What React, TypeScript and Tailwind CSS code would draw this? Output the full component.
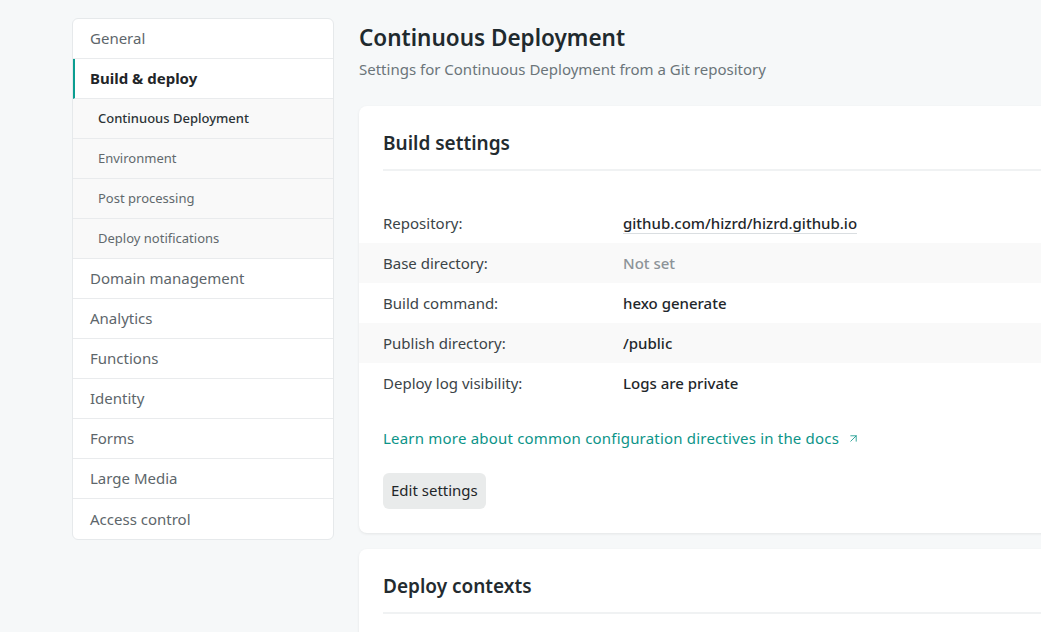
import { ArrowUpRight } from "lucide-react";

const navTop = ["General"];
const subNav = ["Continuous Deployment", "Environment", "Post processing", "Deploy notifications"];
const navBottom = ["Domain management", "Analytics", "Functions", "Identity", "Forms", "Large Media", "Access control"];

const rows = [
  { label: "Repository:", value: "github.com/hizrd/hizrd.github.io", kind: "link" },
  { label: "Base directory:", value: "Not set", kind: "muted" },
  { label: "Build command:", value: "hexo generate", kind: "plain" },
  { label: "Publish directory:", value: "/public", kind: "plain" },
  { label: "Deploy log visibility:", value: "Logs are private", kind: "plain" },
];

const Sidebar = () => {
  return (
    <nav className="w-[262px] shrink-0 self-start bg-white border border-[#e6e9eb] rounded-md overflow-hidden">
      {navTop.map((item) => (
        <div key={item} className="h-10 flex items-center pl-[17px] text-[15px] text-[#5d666b] border-b border-[#e9ebed]">
          {item}
        </div>
      ))}
      <div className="h-10 flex items-center pl-[15px] border-l-2 border-[#0b9e91] border-b border-b-[#e9ebed] text-[15px] font-bold text-[#1f2629]">
        Build &amp; deploy
      </div>
      {subNav.map((item, i) => (
        <div
          key={item}
          className={`h-10 flex items-center pl-[25px] text-[13px] bg-[#f9f9f9] border-b border-[#e9ebed] ${
            i === 0 ? "text-[#2b3336] font-medium" : "text-[#61696d]"
          }`}
        >
          {item}
        </div>
      ))}
      {navBottom.map((item, i) => (
        <div
          key={item}
          className={`h-10 flex items-center pl-[17px] text-[15px] text-[#5d666b] ${
            i < navBottom.length - 1 ? "border-b border-[#e9ebed]" : ""
          }`}
        >
          {item}
        </div>
      ))}
    </nav>
  );
};

const App = () => {
  return (
    <div
      className="h-[632px] overflow-hidden bg-[#f6f8f9] flex gap-[25px] pl-[72px] pt-[18px]"
      style={{ fontFamily: '"Noto Sans", "Open Sans", sans-serif' }}
    >
      <Sidebar />
      <main className="w-[760px] shrink-0">
        <h1 className="text-[22.5px] leading-[30px] font-semibold text-[#1f2a2e] mt-[5px]">Continuous Deployment</h1>
        <p className="text-[15px] leading-5 text-[#6b7579] mt-[6px]">
          Settings for Continuous Deployment from a Git repository
        </p>

        <section className="mt-[27px] bg-white rounded-lg shadow-[0_1px_3px_rgba(0,0,0,0.08)] pt-[21px] pb-6">
          <div className="ml-6 border-b-2 border-[#f0f2f3] pb-[10px]">
            <h2 className="text-[19px] leading-8 font-semibold text-[#232b2f]">Build settings</h2>
          </div>
          <dl className="mt-[32px]">
            {rows.map((row, i) => (
              <div key={row.label} className={`h-10 flex items-center px-6 text-[15px] ${i % 2 === 1 ? "bg-[#f9f9f9]" : ""}`}>
                <dt className="w-[240px] shrink-0 text-[#3b4448]">{row.label}</dt>
                {row.kind === "link" ? (
                  <dd className="text-[#1f272b] font-medium leading-5 border-b border-[#dadee1]">{row.value}</dd>
                ) : row.kind === "muted" ? (
                  <dd className="text-[#8c9398] font-medium">{row.value}</dd>
                ) : (
                  <dd className="text-[#1f272b] font-medium">{row.value}</dd>
                )}
              </div>
            ))}
          </dl>
          <a href="#" className="mt-[24px] mx-6 flex items-center gap-1 text-[15px] tracking-[0.2px] text-[#0c9488]">
            Learn more about common configuration directives in the docs
            <ArrowUpRight size={13} strokeWidth={1.5} className="ml-1" />
          </a>
          <button className="mt-[23px] ml-6 h-9 px-2 rounded-md bg-[#e9ebeb] text-[15px] text-[#1f2629]">
            Edit settings
          </button>
        </section>

        <section className="mt-4 bg-white rounded-lg shadow-[0_1px_3px_rgba(0,0,0,0.08)] pt-[21px] h-[120px]">
          <div className="ml-6 border-b-2 border-[#f0f2f3] pb-[10px]">
            <h2 className="text-[19px] leading-8 font-semibold text-[#232b2f]">Deploy contexts</h2>
          </div>
        </section>
      </main>
    </div>
  );
};

export default App;
